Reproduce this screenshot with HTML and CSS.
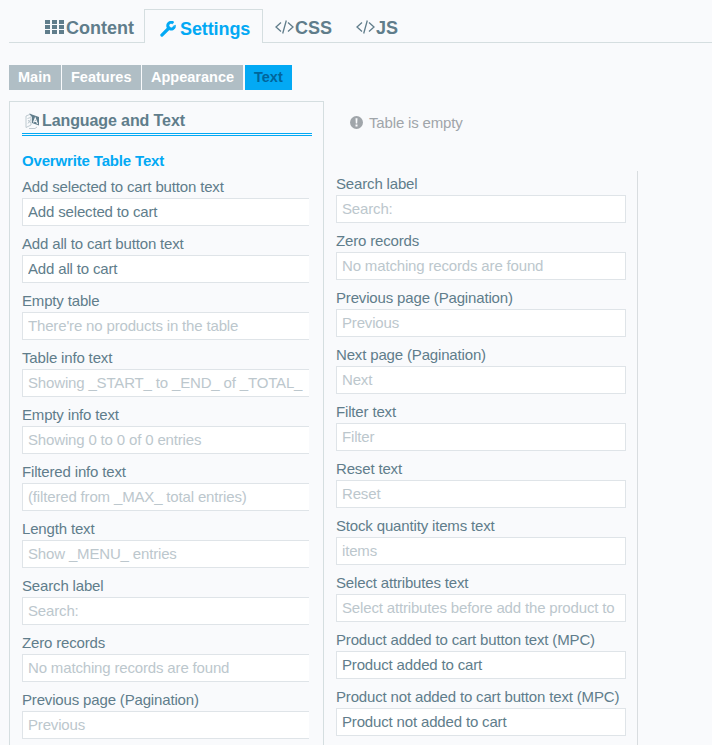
FILE: index.html
```html
<!DOCTYPE html>
<html lang="en">
<head>
  <meta charset="UTF-8">
  <title>Table Settings</title>
  <link rel="stylesheet" href="styles.css">
</head>
<body>

  <!-- main tabs -->
  <nav class="tabs">
    <a class="tab tab-content">
      <svg width="19" height="14" viewBox="0 0 19 14" shape-rendering="crispEdges"><path fill="currentColor" d="M0 0h5v4H0zM7 0h5v4H7zM14 0h5v4h-5zM0 5h5v4H0zM7 5h5v4H7zM14 5h5v4h-5zM0 10h5v4H0zM7 10h5v4H7zM14 10h5v4h-5z"/></svg>
      <span>Content</span>
    </a>
    <a class="tab tab-settings active">
      <svg width="16" height="16" viewBox="0 0 16 16"><path fill="none" stroke="currentColor" stroke-width="3.200" stroke-linecap="round" d="M1.900 14.100L9 7"/><path fill="none" stroke="currentColor" stroke-width="3" d="M13 1.800A3.400 3.400 0 1 0 14.500 5.500"/><path fill="currentColor" d="M11.500.3l2.600.7-1.500 2.500zM15.800 3.700l-.2 2.300-3.300-.8z"/></svg>
      <span>Settings</span>
    </a>
    <a class="tab tab-css">
      <svg width="19" height="14" viewBox="0 0 19 14"><path fill="none" stroke="currentColor" stroke-width="1.300" d="M6 2.500L1 7l5 4.500M13 2.500l5 4.500-5 4.500M11.300 .5L7.700 13.500"/></svg>
      <span>CSS</span>
    </a>
    <a class="tab tab-js">
      <svg width="19" height="14" viewBox="0 0 19 14"><path fill="none" stroke="currentColor" stroke-width="1.300" d="M6 2.500L1 7l5 4.500M13 2.500l5 4.500-5 4.500M11.300 .5L7.700 13.500"/></svg>
      <span>JS</span>
    </a>
  </nav>

  <!-- settings sub tabs -->
  <nav class="subtabs">
    <a class="subtab main"><span>Main</span></a>
    <a class="subtab features"><span>Features</span></a>
    <a class="subtab appearance"><span>Appearance</span></a>
    <a class="subtab text active"><span>Text</span></a>
  </nav>

  <div class="columns">
    <section class="panel">
      <h2 class="panel-title">
        <svg width="15" height="16" viewBox="0 0 15 16"><path fill="none" stroke="#b0bec5" stroke-width=".8" d="M1 3l5-2v11L1 14.500zM2.500 5.500l3-1M3 10.500l2.500-4M3 7l2.500 3M4 15.500h6l2-1.500"/><path fill="currentColor" d="M4 .5l10 3.500v8.500l-7-2.500V4z"/><path fill="none" stroke="#f9fafc" stroke-width="1.100" d="M8.500 9.500l1.700-4.500 2.300 6M9.200 8l2.800 1"/></svg>
        <span>Language and Text</span>
      </h2>
      <div class="group-title"><span>Overwrite Table Text</span></div>
      <div class="fields">
        <label class="field"><span>Add selected to cart button text</span><input type="text" value="Add selected to cart"></label>
        <label class="field"><span>Add all to cart button text</span><input type="text" value="Add all to cart"></label>
        <label class="field"><span>Empty table</span><input type="text" placeholder="There're no products in the table"></label>
        <label class="field"><span>Table info text</span><input type="text" placeholder="Showing _START_ to _END_ of _TOTAL_"></label>
        <label class="field"><span>Empty info text</span><input type="text" placeholder="Showing 0 to 0 of 0 entries"></label>
        <label class="field"><span>Filtered info text</span><input type="text" placeholder="(filtered from _MAX_ total entries)"></label>
        <label class="field"><span>Length text</span><input type="text" placeholder="Show _MENU_ entries"></label>
        <label class="field"><span>Search label</span><input type="text" placeholder="Search:"></label>
        <label class="field"><span>Zero records</span><input type="text" placeholder="No matching records are found"></label>
        <label class="field"><span>Previous page (Pagination)</span><input type="text" placeholder="Previous"></label>
      </div>
    </section>

    <section class="side">
      <div class="notice">
        <svg width="13" height="13" viewBox="0 0 13 13"><circle cx="6.500" cy="6.500" r="6.500" fill="#a0a5aa"/><path fill="#f9fafc" d="M5.500 2.200h2l-.3 5.300H5.800zM5.500 8.600h2v2h-2z"/></svg>
        <span>Table is empty</span>
      </div>
      <div class="fields">
        <label class="field"><span>Search label</span><input type="text" placeholder="Search:"></label>
        <label class="field"><span>Zero records</span><input type="text" placeholder="No matching records are found"></label>
        <label class="field"><span>Previous page (Pagination)</span><input type="text" placeholder="Previous"></label>
        <label class="field"><span>Next page (Pagination)</span><input type="text" placeholder="Next"></label>
        <label class="field"><span>Filter text</span><input type="text" placeholder="Filter"></label>
        <label class="field"><span>Reset text</span><input type="text" placeholder="Reset"></label>
        <label class="field"><span>Stock quantity items text</span><input type="text" placeholder="items"></label>
        <label class="field"><span>Select attributes text</span><input type="text" placeholder="Select attributes before add the product to"></label>
        <label class="field"><span>Product added to cart button text (MPC)</span><input type="text" value="Product added to cart"></label>
        <label class="field"><span>Product not added to cart button text (MPC)</span><input type="text" value="Product not added to cart"></label>
      </div>
    </section>
  </div>

</body>
</html>
```
FILE: styles.css
```css
* {
  box-sizing: border-box;
}
body {
  margin: 0;
  height: 745px;
  overflow: hidden;
  background-color: #f9fafc;
  color: #607d8b;
  font-family: "Liberation Sans", Arial, sans-serif;
  font-size: 15px;
  letter-spacing: -0.16px;
}
.tabs {
  display: flex;
  align-items: flex-end;
  height: 43px;
  margin-left: 9px;
  letter-spacing: 0;
}
.tab {
  display: flex;
  align-items: center;
  height: 34px;
  padding-top: 5px;
  font-size: 18px;
  font-weight: bold;
  line-height: 20px;
  border-bottom: 1px solid #d5dee0;
}
.tab svg {
  margin-bottom: 2px;
}
.tab-content {
  width: 135px;
  padding-left: 36px;
  gap: 2px;
}
.tab-settings {
  width: 119px;
  padding: 5px 0 0 15px;
  gap: 4px;
  letter-spacing: -0.1px;
}
.tab.active {
  color: #03a9f4;
  border: 1px solid #d5dee0;
  border-bottom: none;
}
.tab-settings svg {
  margin-bottom: 0;
}
.tab-css {
  width: 81px;
  padding-left: 12px;
  gap: 1px;
}
.tab-js {
  flex: 1;
  padding-left: 12px;
  gap: 1px;
}
.subtabs {
  display: flex;
  gap: 1px;
  margin: 22px 0 0 9px;
  height: 25px;
  letter-spacing: 0;
}
.subtab {
  padding-left: 9px;
  background-color: #b0bec5;
  color: #fff;
  font-size: 14.5px;
  font-weight: bold;
  line-height: 24px;
}
.subtab.main {
  width: 52px;
}
.subtab.features {
  width: 79px;
}
.subtab.appearance {
  width: 101px;
}
.subtab.text {
  width: 47px;
  margin-left: 1px;
}
.subtab.active {
  background-color: #03a9f4;
  color: #01659a;
}
.columns {
  display: flex;
  margin: 11px 0 0 9px;
  height: 644px;
}
.panel {
  width: 315px;
  padding: 0 11px 0 12px;
  border: 1px solid #d5dee0;
  border-bottom: none;
}
.panel-title {
  display: flex;
  align-items: center;
  gap: 2px;
  height: 34px;
  margin: 0;
  padding: 7px 0 0 3px;
  border-bottom: 3px double #03a9f4;
  font-size: 16px;
  line-height: 18px;
  letter-spacing: -0.1px;
}
.panel-title svg {
  margin-bottom: 1px;
}
.group-title {
  height: 43px;
  padding-top: 16px;
  color: #03a9f4;
  font-weight: bold;
  line-height: 18px;
}
.field {
  display: block;
  height: 57px;
}
.field span {
  display: block;
  height: 19px;
  line-height: 15px;
  white-space: nowrap;
}
.field input {
  display: block;
  width: 290px;
  height: 28px;
  margin: 0;
  padding: 0 6px 2px 5px;
  border: 1px solid #dfe4e8;
  border-radius: 0;
  background-color: #fff;
  color: #607d8b;
  font-family: inherit;
  font-size: 15px;
  letter-spacing: -0.16px;
}
.field input::placeholder {
  color: #bcc7cd;
}
.panel .field input {
  width: 287px;
  border-right: none;
}
.side {
  width: 314px;
  padding-left: 12px;
}
.notice {
  display: flex;
  align-items: center;
  gap: 6px;
  height: 70px;
  padding: 0 0 27px 14px;
  color: #a0a5aa;
}
.side .fields {
  width: 302px;
  height: 574px;
  padding-top: 5px;
  border-right: 1px solid #d9dde0;
}
```
